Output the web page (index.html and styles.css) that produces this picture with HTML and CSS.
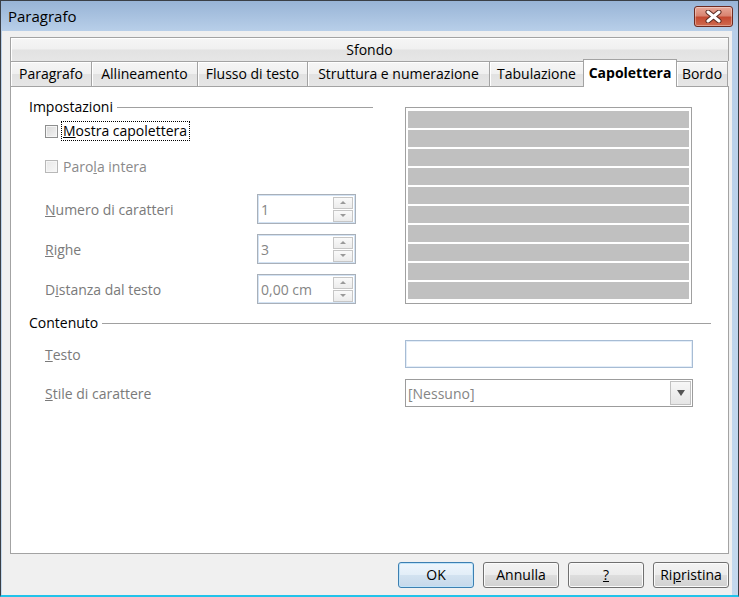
FILE: index.html
```html
<!DOCTYPE html>
<html lang="it">
<head>
<meta charset="utf-8">
<title>Paragrafo</title>
<link rel="stylesheet" href="styles.css">
</head>
<body>
<div class="window">
  <div class="titlebar">
    <span class="title">Paragrafo</span>
    <div class="close">
      <svg width="17" height="13" viewBox="0 0 17 13">
        <path d="M3 2 L14 11 M14 2 L3 11" stroke="#5a2a22" stroke-width="5" stroke-linecap="round"/>
        <path d="M3 2 L14 11 M14 2 L3 11" stroke="#ffffff" stroke-width="3" stroke-linecap="round"/>
      </svg>
    </div>
  </div>
  <div class="client">
    <div class="tabctl">
      <div class="tabrow tabrow-top"><div class="tab tab-full">Sfondo</div></div>
      <div class="tabrow">
        <div class="tab t1">Paragrafo</div>
        <div class="tab t2">Allineamento</div>
        <div class="tab t3">Flusso di testo</div>
        <div class="tab t4">Struttura e numerazione</div>
        <div class="tab t5">Tabulazione</div>
        <div class="tab t6 active">Capolettera</div>
        <div class="tab t7">Bordo</div>
      </div>
      <div class="panel">
        <div class="top">
          <div class="leftcol">
            <div class="heading"><span class="htext">Impostazioni</span><span class="rule"></span></div>
            <div class="check first">
              <span class="box"></span>
              <span class="focus"><u>M</u>ostra capolettera</span>
            </div>
            <div class="check disabled">
              <span class="box"></span>
              <span class="ctext">Paro<u>l</u>a intera</span>
            </div>
            <div class="field f1">
              <span class="lbl"><u>N</u>umero di caratteri</span>
              <div class="spin"><span class="val">1</span><span class="spinbtns"><span class="sb up"></span><span class="sb down"></span></span></div>
            </div>
            <div class="field">
              <span class="lbl"><u>R</u>ighe</span>
              <div class="spin"><span class="val">3</span><span class="spinbtns"><span class="sb up"></span><span class="sb down"></span></span></div>
            </div>
            <div class="field">
              <span class="lbl">D<u>i</u>stanza dal testo</span>
              <div class="spin"><span class="val">0,00 cm</span><span class="spinbtns"><span class="sb up"></span><span class="sb down"></span></span></div>
            </div>
          </div>
          <div class="preview">
            <div class="bar"></div><div class="bar"></div><div class="bar"></div><div class="bar"></div><div class="bar"></div>
            <div class="bar"></div><div class="bar"></div><div class="bar"></div><div class="bar"></div><div class="bar"></div>
          </div>
        </div>
        <div class="heading heading2"><span class="htext">Contenuto</span><span class="rule"></span></div>
        <div class="frow r1">
          <span class="lbl lbl-wide"><u>T</u>esto</span>
          <div class="textbox"></div>
        </div>
        <div class="frow r2">
          <span class="lbl lbl-wide"><u>S</u>tile di carattere</span>
          <div class="combo"><span class="ctxt">[Nessuno]</span><span class="drop"></span></div>
        </div>
      </div>
    </div>
    <div class="buttons">
      <div class="btn default">OK</div>
      <div class="btn">Annulla</div>
      <div class="btn"><u>?</u></div>
      <div class="btn">Ri<u>p</u>ristina</div>
    </div>
  </div>
</div>
</body>
</html>
```
FILE: styles.css
```css
html, body {
  margin: 0;
  padding: 0;
}
body {
  font-family: "Open Sans", "Noto Sans", sans-serif;
  font-size: 14px;
  color: #000;
}
.window {
  width: 739px;
  height: 597px;
  box-sizing: border-box;
  border: 1px solid #3a3f46;
  border-bottom: 2px solid #22c3ea;
  background: linear-gradient(to bottom, #98b4d6 0, #b8cfe9 30px, #c4d9ee 100%);
  display: flex;
  flex-direction: column;
}
.titlebar {
  height: 30px;
  flex: none;
  display: flex;
  align-items: center;
  justify-content: space-between;
  padding: 0 5px 0 7px;
}
.title {
  font-size: 15px;
  line-height: 20px;
}
.close {
  width: 39px;
  height: 21px;
  box-sizing: border-box;
  border: 1px solid #6e2a20;
  border-radius: 3px;
  background: linear-gradient(to bottom, #e8a898 0, #d98572 45%, #c44a32 55%, #cf6a50 100%);
  display: flex;
  align-items: center;
  justify-content: center;
  box-shadow: inset 0 0 0 1px rgba(255,255,255,0.35);
}
.client {
  flex: 1;
  margin: 0 6px 0 1px;
  background: #f0f0f0;
  padding: 6px 3px 0 8px;
  display: flex;
  flex-direction: column;
  min-height: 0;
}
.tabctl {
  flex: 1;
  display: flex;
  flex-direction: column;
  min-height: 0;
}
.tabrow {
  display: flex;
  flex: none;
}
.tab {
  box-sizing: border-box;
  height: 25px;
  border: 1px solid #a3a3a3;
  border-bottom: none;
  border-right: none;
  background: linear-gradient(to bottom, #f6f6f6 0, #f0f0f0 48%, #e2e2e2 52%, #e6e6e6 100%);
  box-shadow: inset 1px 1px 0 #ffffff;
  display: flex;
  align-items: center;
  justify-content: center;
  white-space: nowrap;
  line-height: 20px;
}
.tab-full {
  flex: 1;
  height: 24px;
  border-right: 1px solid #a3a3a3;
}
.t1 { width: 81px; }
.t2 { width: 106px; }
.t3 { width: 110px; }
.t4 { width: 182px; }
.t5 { width: 94px; }
.t6 { width: 94px; }
.t7 { width: 51px; border-right: 1px solid #a3a3a3; }
.tab.active {
  position: relative;
  z-index: 2;
  height: 28px;
  margin-top: -2px;
  margin-bottom: -1px;
  background: #ffffff;
  box-shadow: none;
  border-right: 1px solid #a3a3a3;
  font-weight: bold;
  padding-bottom: 2px;
}
.tab.active + .tab {
  border-left: none;
}
.panel {
  flex: 1;
  background: #ffffff;
  border: 1px solid #a3a3a3;
  padding: 10px 17px 0 18px;
  position: relative;
  z-index: 1;
}
.top {
  display: flex;
}
.leftcol {
  width: 344px;
  display: flex;
  flex-direction: column;
}
.heading {
  display: flex;
  align-items: center;
  height: 20px;
}
.htext {
  line-height: 20px;
  white-space: nowrap;
}
.rule {
  flex: 1;
  height: 1px;
  background: #a0a0a0;
  margin-left: 4px;
}
.check {
  display: flex;
  align-items: center;
  height: 20px;
  padding-left: 16px;
}
.check.first { margin-top: 4px; }
.check.disabled { margin-top: 15px; color: #8a8a8a; }
.box {
  width: 13px;
  height: 13px;
  box-sizing: border-box;
  border: 1px solid #8e8f8f;
  background: linear-gradient(135deg, #d8d8d8 0, #f4f4f4 100%);
  box-shadow: inset 0 0 0 1px #f6f6f6;
  margin-right: 4px;
  flex: none;
}
.check.disabled .box {
  border-color: #b8b8b8;
  background: linear-gradient(135deg, #e8e8e8 0, #f7f7f7 100%);
}
.focus {
  outline: 1px dotted #000;
  line-height: 18px;
  padding: 0 2px 0 1px;
}
.ctext {
  padding-left: 1px;
}
.field {
  display: flex;
  align-items: center;
  padding-left: 16px;
  margin-top: 10px;
  color: #7a7a7a;
}
.field.f1 { margin-top: 18px; }
.lbl {
  width: 212px;
  flex: none;
  white-space: nowrap;
}
.lbl-wide {
  width: 360px;
  color: #7a7a7a;
}
.spin {
  width: 99px;
  height: 30px;
  box-sizing: border-box;
  border: 1px solid #a9b0b9;
  box-shadow: inset 0 0 0 1px #d3e3f4;
  display: flex;
  align-items: center;
  justify-content: space-between;
  padding: 0 2px 0 3px;
  color: #858585;
}
.spinbtns {
  display: flex;
  flex-direction: column;
  width: 20px;
}
.sb {
  height: 12px;
  box-sizing: border-box;
  border: 1px solid #c6c6c6;
  background: linear-gradient(to bottom, #fafafa, #ececec);
  display: flex;
  align-items: center;
  justify-content: center;
}
.sb.down { margin-top: 1px; }
.sb.up::after {
  content: "";
  border-left: 3px solid transparent;
  border-right: 3px solid transparent;
  border-bottom: 3px solid #9a9a9a;
}
.sb.down::after {
  content: "";
  border-left: 3px solid transparent;
  border-right: 3px solid transparent;
  border-top: 3px solid #9a9a9a;
}
.preview {
  margin-left: 32px;
  margin-top: 10px;
  width: 287px;
  height: 197px;
  box-sizing: border-box;
  border: 1px solid #a0a0a0;
  padding: 3px 2px 0 2px;
  display: flex;
  flex-direction: column;
  gap: 2px;
}
.bar {
  height: 17px;
  background: #c0c0c0;
  flex: none;
}
.heading2 {
  margin-top: 9px;
}
.frow {
  display: flex;
  align-items: center;
  padding-left: 16px;
}
.frow.r1 { margin-top: 7px; }
.frow.r2 { margin-top: 11px; }
.textbox {
  width: 288px;
  height: 28px;
  box-sizing: border-box;
  border: 1px solid #a7bcd4;
  box-shadow: inset 0 0 0 1px #e3edf8;
}
.combo {
  width: 288px;
  height: 28px;
  box-sizing: border-box;
  border: 1px solid #9c9c9c;
  display: flex;
  align-items: center;
  justify-content: space-between;
  padding: 0 1px 0 2px;
  color: #858585;
}
.drop {
  width: 21px;
  height: 24px;
  box-sizing: border-box;
  border: 1px solid #c0c0c0;
  background: linear-gradient(to bottom, #f7f7f7, #e6e6e6);
  display: flex;
  align-items: center;
  justify-content: center;
}
.drop::after {
  content: "";
  border-left: 4px solid transparent;
  border-right: 4px solid transparent;
  border-top: 6px solid #555555;
}
.buttons {
  flex: none;
  height: 41px;
  box-sizing: border-box;
  padding: 8px 0 7px 0;
  display: flex;
  justify-content: flex-end;
  gap: 9px;
}
.btn {
  width: 76px;
  height: 26px;
  box-sizing: border-box;
  border: 1px solid #707070;
  border-radius: 3px;
  background: linear-gradient(to bottom, #f3f3f3 0, #ececec 48%, #dddddd 52%, #d1d1d1 100%);
  box-shadow: inset 0 0 0 1px #fbfbfb;
  display: flex;
  align-items: center;
  justify-content: center;
  line-height: 20px;
}
.btn.default {
  border-color: #3c7fb1;
  background: linear-gradient(to bottom, #eef6fc 0, #e3eef8 48%, #d2e2f0 52%, #c6d8ea 100%);
  box-shadow: inset 0 0 0 1px #bfe3f9;
}
```
